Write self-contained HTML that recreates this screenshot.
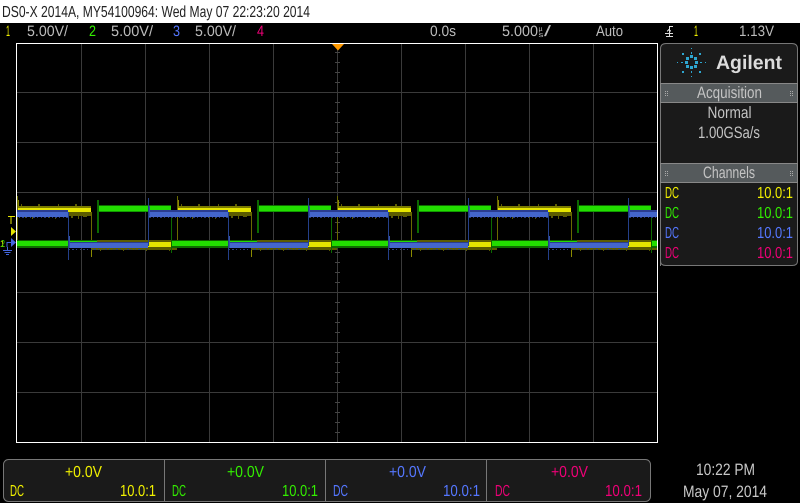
<!DOCTYPE html>
<html><head><meta charset="utf-8"><style>
html,body{margin:0;padding:0;background:#000;width:800px;height:503px;overflow:hidden}
svg{display:block}
text{font-family:"Liberation Sans",sans-serif;text-rendering:geometricPrecision}
</style></head><body>
<svg width="800" height="503" viewBox="0 0 800 503" xmlns="http://www.w3.org/2000/svg" shape-rendering="crispEdges">
<defs>
<clipPath id="pc"><rect x="17" y="44" width="640" height="398"/></clipPath>
<pattern id="ny" width="37" height="4" patternUnits="userSpaceOnUse"><rect x="2" width="1" height="2" fill="#5c5c00"/><rect x="19" width="2" height="2" fill="#5c5c00"/></pattern>
<pattern id="ny2" width="23" height="4" patternUnits="userSpaceOnUse"><rect x="2" width="2" height="2" fill="#5c5c00"/><rect x="9" width="1" height="3" fill="#5c5c00"/><rect x="14" width="4" height="1" fill="#5c5c00"/></pattern>
<pattern id="nb" width="11" height="3" patternUnits="userSpaceOnUse"><rect x="1" width="1" height="2" fill="#2b3c80"/><rect x="4" width="2" height="2" fill="#2b3c80"/><rect x="8" width="1" height="2" fill="#2b3c80"/></pattern>
<g id="py">
<rect x="23" y="240" width="86" height="2" fill="#5c5c00"/>
<rect x="23" y="242" width="86" height="5" fill="#e6e600"/>
<rect x="23" y="247" width="86" height="3" fill="#5c5c00"/>
<rect x="23" y="250" width="86" height="2" fill="url(#ny2)"/>
<rect x="109" y="206" width="74" height="2" fill="#7a7a00"/>
<rect x="109" y="204" width="74" height="2" fill="url(#ny)"/>
<rect x="109" y="208" width="74" height="4" fill="#e6e600"/>
<rect x="109" y="212" width="74" height="4" fill="#5c5c00"/>
<rect x="109" y="216" width="74" height="3" fill="url(#ny2)"/>
<rect x="23" y="212" width="1" height="45" fill="#6a6a00"/>
<rect x="23" y="250" width="1" height="7" fill="#8a8a00"/>
<rect x="109" y="196" width="1" height="50" fill="#6a6a00"/>
<rect x="110" y="200" width="1" height="8" fill="#8a8a00"/>
</g>
<g id="pg">
<rect x="103" y="240" width="86" height="2" fill="#0f5c00"/>
<rect x="103" y="241" width="86" height="5" fill="#22dd00"/>
<rect x="103" y="246" width="86" height="2" fill="#0f6a00"/>
<rect x="29" y="206" width="74" height="5" fill="#22dd00"/>
<rect x="29" y="211" width="74" height="1" fill="#119900"/>
<rect x="29" y="205" width="74" height="1" fill="#0f6a00"/>
<rect x="29" y="200" width="2" height="33" fill="#0c6a00"/>
<rect x="103" y="218" width="1" height="35" fill="#0c6a00"/>
</g>
<g id="pb">
<rect x="0" y="242" width="80" height="1" fill="#2a3c90"/>
<rect x="0" y="243" width="80" height="5" fill="#4466cc"/>
<rect x="0" y="248" width="80" height="2" fill="url(#nb)"/>
<rect x="80" y="210" width="80" height="2" fill="#2a3c90"/>
<rect x="80" y="212" width="80" height="5" fill="#4466cc"/>
<rect x="80" y="217" width="80" height="2" fill="url(#nb)"/>
<rect x="0" y="212" width="1" height="48" fill="#24408a"/>
<rect x="1" y="236" width="1" height="12" fill="#3350a8"/>
<rect x="80" y="198" width="1" height="48" fill="#24408a"/>
<rect x="81" y="206" width="1" height="10" fill="#3350a8"/>
</g>
</defs>

<rect x="0" y="0" width="800" height="23" fill="#fff"/>
<text x="2" y="17" font-size="16" fill="#222" textLength="308" lengthAdjust="spacingAndGlyphs">DS0-X 2014A, MY54100964: Wed May 07 22:23:20 2014</text>

<g font-size="15" fill="#bcbcbc">
<text x="6" y="36" fill="#f0f000" textLength="4" lengthAdjust="spacingAndGlyphs">1</text>
<text x="27" y="36" textLength="41" lengthAdjust="spacingAndGlyphs">5.00V/</text>
<text x="89" y="36" fill="#33ee00" textLength="7" lengthAdjust="spacingAndGlyphs">2</text>
<text x="111" y="36" textLength="42" lengthAdjust="spacingAndGlyphs">5.00V/</text>
<text x="173" y="36" fill="#5577ff" textLength="7" lengthAdjust="spacingAndGlyphs">3</text>
<text x="195" y="36" textLength="41" lengthAdjust="spacingAndGlyphs">5.00V/</text>
<text x="257" y="36" fill="#ee0077" textLength="7" lengthAdjust="spacingAndGlyphs">4</text>
<text x="430" y="36" textLength="26" lengthAdjust="spacingAndGlyphs">0.0s</text>
<text x="502" y="36" textLength="36" lengthAdjust="spacingAndGlyphs">5.000</text>
<text x="538.500" y="31" font-size="7">µ</text>
<text x="538.500" y="37" font-size="7" textLength="5" lengthAdjust="spacingAndGlyphs">s</text>
<text x="544" y="36" textLength="7" lengthAdjust="spacingAndGlyphs">/</text>
<text x="596" y="36" textLength="27" lengthAdjust="spacingAndGlyphs">Auto</text>
<text x="694" y="36" fill="#f0f000" textLength="4" lengthAdjust="spacingAndGlyphs">1</text>
<text x="739" y="36" textLength="35" lengthAdjust="spacingAndGlyphs">1.13V</text>
</g>
<path d="M669.500 26.500H673M669.500 26V36M665 33.500H673M666 36.500H673M667 31.500L669 29.500L671 31.500" stroke="#ddd" stroke-width="1" fill="none"/>

<!-- grid -->
<g stroke="#3a3a3a" stroke-width="1" fill="none">
<path d="M81.500 44V442M145.500 44V442M209.500 44V442M273.500 44V442M337.500 44V442M401.500 44V442M465.500 44V442M529.500 44V442M593.500 44V442"/>
<path d="M17 92.500H657M17 142.500H657M17 192.500H657M17 242.500H657M17 292.500H657M17 342.500H657M17 392.500H657"/>
<path stroke="#444" d="M335 52.500H340M335 62.500H340M335 72.500H340M335 82.500H340M335 102.500H340M335 112.500H340M335 122.500H340M335 132.500H340M335 152.500H340M335 162.500H340M335 172.500H340M335 182.500H340M335 202.500H340M335 212.500H340M335 222.500H340M335 232.500H340M335 252.500H340M335 262.500H340M335 272.500H340M335 282.500H340M335 302.500H340M335 312.500H340M335 322.500H340M335 332.500H340M335 352.500H340M335 362.500H340M335 372.500H340M335 382.500H340M335 402.500H340M335 412.500H340M335 422.500H340M335 432.500H340"/>
</g>

<!-- traces: one layer per channel so blue stays on top of green and yellow -->
<g clip-path="url(#pc)">
<use href="#py" x="-252"/><use href="#py" x="-92"/><use href="#py" x="68"/><use href="#py" x="228"/><use href="#py" x="388"/><use href="#py" x="548"/>
<use href="#pg" x="-252"/><use href="#pg" x="-92"/><use href="#pg" x="68"/><use href="#pg" x="228"/><use href="#pg" x="388"/><use href="#pg" x="548"/>
<use href="#pb" x="-92"/><use href="#pb" x="68"/><use href="#pb" x="228"/><use href="#pb" x="388"/><use href="#pb" x="548"/>
</g>

<rect x="16.500" y="43.500" width="641" height="399" fill="none" stroke="#fff" stroke-width="1"/>
<rect x="16" y="43" width="1" height="400" fill="#fff"/>
<path d="M332 44H344L338 50.500Z" fill="#ff9900" shape-rendering="auto"/>

<!-- left markers -->
<path d="M8 216.500H15M11 217V224" stroke="#e6e600" stroke-width="1" fill="none"/>
<path d="M11 227L16 231.500L11 236Z" fill="#e6e600" shape-rendering="auto"/>
<path d="M11 238L16 242.500L11 247Z" fill="#4466dd" shape-rendering="auto"/>
<path d="M7 247V242.500H11M7.500 247V251M3 250.500H12M4.500 252.500H10.500M6 254.500H9" stroke="#4466dd" stroke-width="1" fill="none"/>
<text x="0" y="247" font-size="10" fill="#e6e600" textLength="5" lengthAdjust="spacingAndGlyphs">1</text>
<text x="1" y="247" font-size="10" fill="#22cc00" textLength="4" lengthAdjust="spacingAndGlyphs">2</text>

<!-- side panel -->
<path d="M660.500 266V49Q660.500 43.500 666 43.500H792Q797.500 43.500 797.500 49V261Q797.500 265.500 792 265.500H666Q660.500 265.500 660.500 261Z" fill="#1a1a1a" stroke="#777" shape-rendering="auto"/>
<text x="716" y="69" font-size="19.500" font-weight="bold" fill="#dcdcdc" textLength="66" lengthAdjust="spacingAndGlyphs">Agilent</text>
<g fill="#2ea6d0">
<rect x="690" y="55" width="3" height="3"/><rect x="690" y="66" width="3" height="3"/><rect x="685" y="61" width="3" height="3"/><rect x="695" y="61" width="3" height="3"/>
<rect x="686" y="57" width="3" height="3"/><rect x="694" y="57" width="3" height="3"/><rect x="686" y="65" width="3" height="3"/><rect x="694" y="65" width="3" height="3"/>
<rect x="691" y="48" width="1" height="1"/><rect x="691" y="52" width="1" height="2"/><rect x="691" y="71" width="1" height="2"/><rect x="691" y="76" width="1" height="1"/>
<rect x="677" y="62" width="1" height="1"/><rect x="681" y="62" width="2" height="1"/><rect x="700" y="62" width="2" height="1"/><rect x="705" y="62" width="1" height="1"/>
<rect x="682" y="53" width="2" height="2"/><rect x="699" y="53" width="2" height="2"/><rect x="682" y="71" width="2" height="2"/><rect x="699" y="71" width="2" height="2"/>
</g>
<rect x="660.500" y="83.500" width="137" height="19" fill="#555a5c" stroke="#888"/>
<rect x="660.500" y="163.500" width="137" height="19" fill="#555a5c" stroke="#888"/>
<g fill="#aaa">
<rect x="665" y="91" width="1" height="1"/><rect x="667" y="91" width="1" height="1"/><rect x="665" y="93" width="1" height="1"/><rect x="667" y="93" width="1" height="1"/><rect x="665" y="95" width="1" height="1"/><rect x="667" y="95" width="1" height="1"/>
<rect x="790" y="91" width="1" height="1"/><rect x="792" y="91" width="1" height="1"/><rect x="790" y="93" width="1" height="1"/><rect x="792" y="93" width="1" height="1"/><rect x="790" y="95" width="1" height="1"/><rect x="792" y="95" width="1" height="1"/>
<rect x="665" y="171" width="1" height="1"/><rect x="667" y="171" width="1" height="1"/><rect x="665" y="173" width="1" height="1"/><rect x="667" y="173" width="1" height="1"/><rect x="665" y="175" width="1" height="1"/><rect x="667" y="175" width="1" height="1"/>
<rect x="790" y="171" width="1" height="1"/><rect x="792" y="171" width="1" height="1"/><rect x="790" y="173" width="1" height="1"/><rect x="792" y="173" width="1" height="1"/><rect x="790" y="175" width="1" height="1"/><rect x="792" y="175" width="1" height="1"/>
</g>
<g font-size="16.500" fill="#c4c4c4">
<text x="697" y="98" textLength="65" lengthAdjust="spacingAndGlyphs">Acquisition</text>
<text x="707.500" y="118" textLength="44" lengthAdjust="spacingAndGlyphs">Normal</text>
<text x="698" y="138" textLength="62" lengthAdjust="spacingAndGlyphs">1.00GSa/s</text>
<text x="703" y="178" textLength="52" lengthAdjust="spacingAndGlyphs">Channels</text>
</g>
<g font-size="16">
<g fill="#f0f000"><text x="665" y="198" textLength="14" lengthAdjust="spacingAndGlyphs">DC</text><text x="757" y="198" textLength="36" lengthAdjust="spacingAndGlyphs">10.0:1</text></g>
<g fill="#33ee00"><text x="665" y="218" textLength="14" lengthAdjust="spacingAndGlyphs">DC</text><text x="757" y="218" textLength="36" lengthAdjust="spacingAndGlyphs">10.0:1</text></g>
<g fill="#5577ff"><text x="665" y="238" textLength="14" lengthAdjust="spacingAndGlyphs">DC</text><text x="757" y="238" textLength="36" lengthAdjust="spacingAndGlyphs">10.0:1</text></g>
<g fill="#ee0077"><text x="665" y="258" textLength="14" lengthAdjust="spacingAndGlyphs">DC</text><text x="757" y="258" textLength="36" lengthAdjust="spacingAndGlyphs">10.0:1</text></g>
</g>

<!-- bottom bar -->
<rect x="3.500" y="459.500" width="647" height="42" rx="5" fill="#1a1a1a" stroke="#777" shape-rendering="auto"/>
<path d="M164.500 460V501M325.500 460V501M486.500 460V501" stroke="#777" fill="none"/>
<g font-size="16">
<g fill="#f0f000"><text x="65" y="477" textLength="37" lengthAdjust="spacingAndGlyphs">+0.0V</text><text x="10" y="496" textLength="14" lengthAdjust="spacingAndGlyphs">DC</text><text x="120" y="496" textLength="36" lengthAdjust="spacingAndGlyphs">10.0:1</text></g>
<g fill="#33ee00"><text x="227" y="477" textLength="37" lengthAdjust="spacingAndGlyphs">+0.0V</text><text x="172" y="496" textLength="14" lengthAdjust="spacingAndGlyphs">DC</text><text x="282" y="496" textLength="36" lengthAdjust="spacingAndGlyphs">10.0:1</text></g>
<g fill="#5577ff"><text x="389" y="477" textLength="37" lengthAdjust="spacingAndGlyphs">+0.0V</text><text x="333" y="496" textLength="15" lengthAdjust="spacingAndGlyphs">DC</text><text x="443" y="496" textLength="37" lengthAdjust="spacingAndGlyphs">10.0:1</text></g>
<g fill="#ee0077"><text x="551" y="477" textLength="37" lengthAdjust="spacingAndGlyphs">+0.0V</text><text x="495" y="496" textLength="15" lengthAdjust="spacingAndGlyphs">DC</text><text x="605" y="496" textLength="37" lengthAdjust="spacingAndGlyphs">10.0:1</text></g>
</g>
<text x="696" y="475" font-size="16.500" fill="#c8c8c8" textLength="59" lengthAdjust="spacingAndGlyphs">10:22 PM</text>
<text x="683" y="497" font-size="16.500" fill="#c8c8c8" textLength="84" lengthAdjust="spacingAndGlyphs">May 07, 2014</text>
</svg>
</body></html>
